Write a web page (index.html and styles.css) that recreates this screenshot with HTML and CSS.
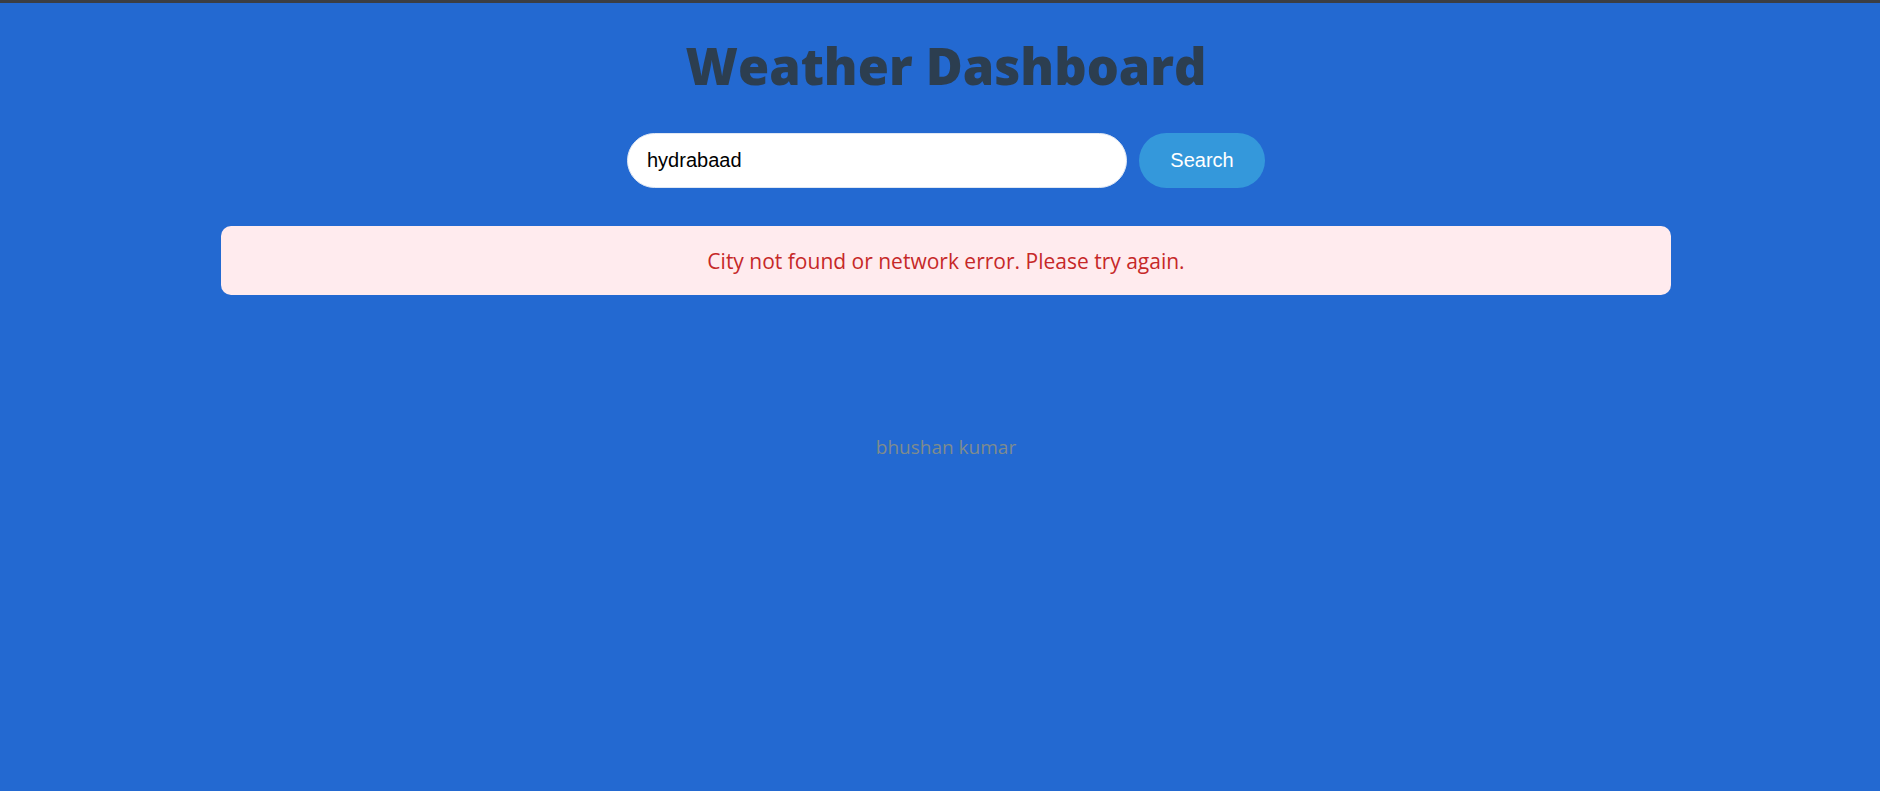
FILE: index.html
```html
<!DOCTYPE html>
<html lang="en">
<head>
<meta charset="utf-8">
<title>Weather Dashboard</title>
<link rel="stylesheet" href="styles.css">
</head>
<body>
  <div class="topbar"></div>
  <main class="container">
    <h1 class="title">Weather Dashboard</h1>
    <form class="search">
      <input class="search-input" type="text" value="hydrabaad">
      <button class="search-btn" type="button">Search</button>
    </form>
    <div class="error">City not found or network error. Please try again.</div>
    <footer class="credit">bhushan kumar</footer>
  </main>
</body>
</html>
```
FILE: styles.css
```css
html, body {
  margin: 0;
  padding: 0;
  height: 100%;
}
body {
  background: #2369d1;
  font-family: "Open Sans", "Noto Sans", sans-serif;
}
.topbar {
  height: 3px;
  background: #3b3e44;
}
.container {
  padding: 0 209px 0 221px;
  display: flex;
  flex-direction: column;
  align-items: center;
}
.title {
  margin: 31px 0 0 0;
  font-size: 50.5px;
  line-height: 64px;
  font-weight: 800;
  color: #2c3e50;
}
.search {
  display: flex;
  gap: 12px;
  margin: 35px 0 0 0;
}
.search-input {
  box-sizing: border-box;
  width: 500px;
  height: 55px;
  border: 1px solid #dfe7f3;
  border-radius: 28px;
  padding: 0 19px;
  font-family: Arial, "Liberation Sans", sans-serif;
  font-size: 20px;
  color: #000;
  background: #fff;
  outline: none;
}
.search-btn {
  box-sizing: border-box;
  width: 126px;
  height: 55px;
  border: none;
  border-radius: 28px;
  background: #3498db;
  color: #fff;
  font-family: Arial, "Liberation Sans", sans-serif;
  font-size: 20px;
  padding: 0;
}
.error {
  align-self: stretch;
  margin-top: 38px;
  height: 69px;
  display: flex;
  align-items: center;
  justify-content: center;
  background: #ffebee;
  border-radius: 10px;
  color: #c62828;
  font-size: 21px;
}
.credit {
  margin-top: 139px;
  color: #7f8c8d;
  font-size: 19px;
}
```
